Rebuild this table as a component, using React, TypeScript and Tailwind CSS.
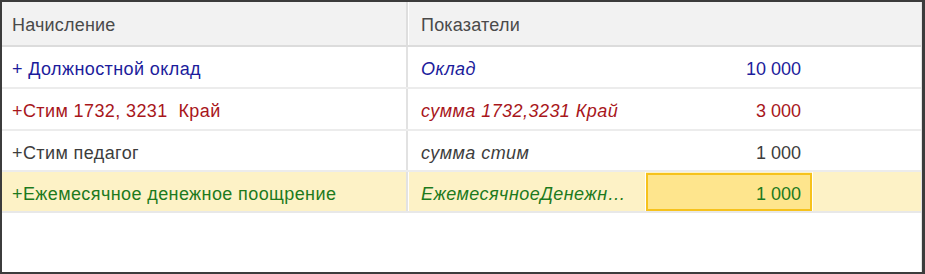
import React from "react";

type Row = { name: string; ind: string; val: string; color: string; hl?: boolean; h: string };

const rows: Row[] = [
  { name: "+ Должностной оклад", ind: "Оклад", val: "10 000", color: "text-[#1c1c9c]", h: "h-[42px]" },
  { name: "+Стим 1732, 3231  Край", ind: "сумма 1732,3231 Край", val: "3 000", color: "text-[#a8161b]", h: "h-[42px]" },
  { name: "+Стим педагог", ind: "сумма стим", val: "1 000", color: "text-[#3d3d3d]", h: "h-[41px]" },
  { name: "+Ежемесячное денежное поощрение", ind: "ЕжемесячноеДенежн…", val: "1 000", color: "text-[#1d7a1d]", hl: true, h: "h-[41px]" },
];

export default function App() {
  return (
    <div
      className="w-[925px] h-[274px] bg-white border-t-2 border-l-2 border-r-[3px] border-b-2 border-[#3c3c3c] flex flex-col text-[18px] leading-none"
      style={{ fontFamily: '"Liberation Sans", Arial, sans-serif' }}
    >
      <div className="flex-1 flex flex-col border-r border-[#e4e4e4]">
        {/* header */}
        <div className="flex h-[45px] bg-[#f2f2f2] border-b-2 border-[#dcdcdc] text-[#4a4a4a] tracking-[0.2px]">
          <div className="w-[406px] flex items-center pt-[2px] pl-[10px] border-r-2 border-[#dedede]">Начисление</div>
          <div className="flex-1 flex items-center pt-[2px] pl-[12px] border-l border-white">Показатели</div>
        </div>
        {rows.map((r, i) => (
          <div
            key={i}
            className={`flex ${r.h} border-b-2 ${r.hl ? "bg-[#fdf2c6] border-[#e8e8e8]" : "border-[#ececec]"} ${r.color}`}
          >
            <div className="w-[406px] flex items-center pt-[4px] pl-[10px] border-r-2 border-[#e2e2e2] whitespace-pre tracking-[0.4px]">{r.name}</div>
            <div className="flex-1 flex items-stretch border-l border-white">
              <div className={`w-[237px] flex items-center pt-[4px] pl-[12px] italic tracking-[0.45px] ${r.hl ? "border-r border-white" : ""}`}>{r.ind}</div>
              <div
                className={`w-[166px] flex items-center justify-end pt-[4px] ${
                  r.hl ? "bg-[#fee58d] border-2 border-[#f6c21c] mt-[1px] pr-[9px]" : "pr-[11px]"
                }`}
              >
                {r.val}
              </div>
              <div className={`flex-1 ${r.hl ? "border-l border-white" : ""}`} />
            </div>
          </div>
        ))}
        <div className="flex-1" />
      </div>
    </div>
  );
}
